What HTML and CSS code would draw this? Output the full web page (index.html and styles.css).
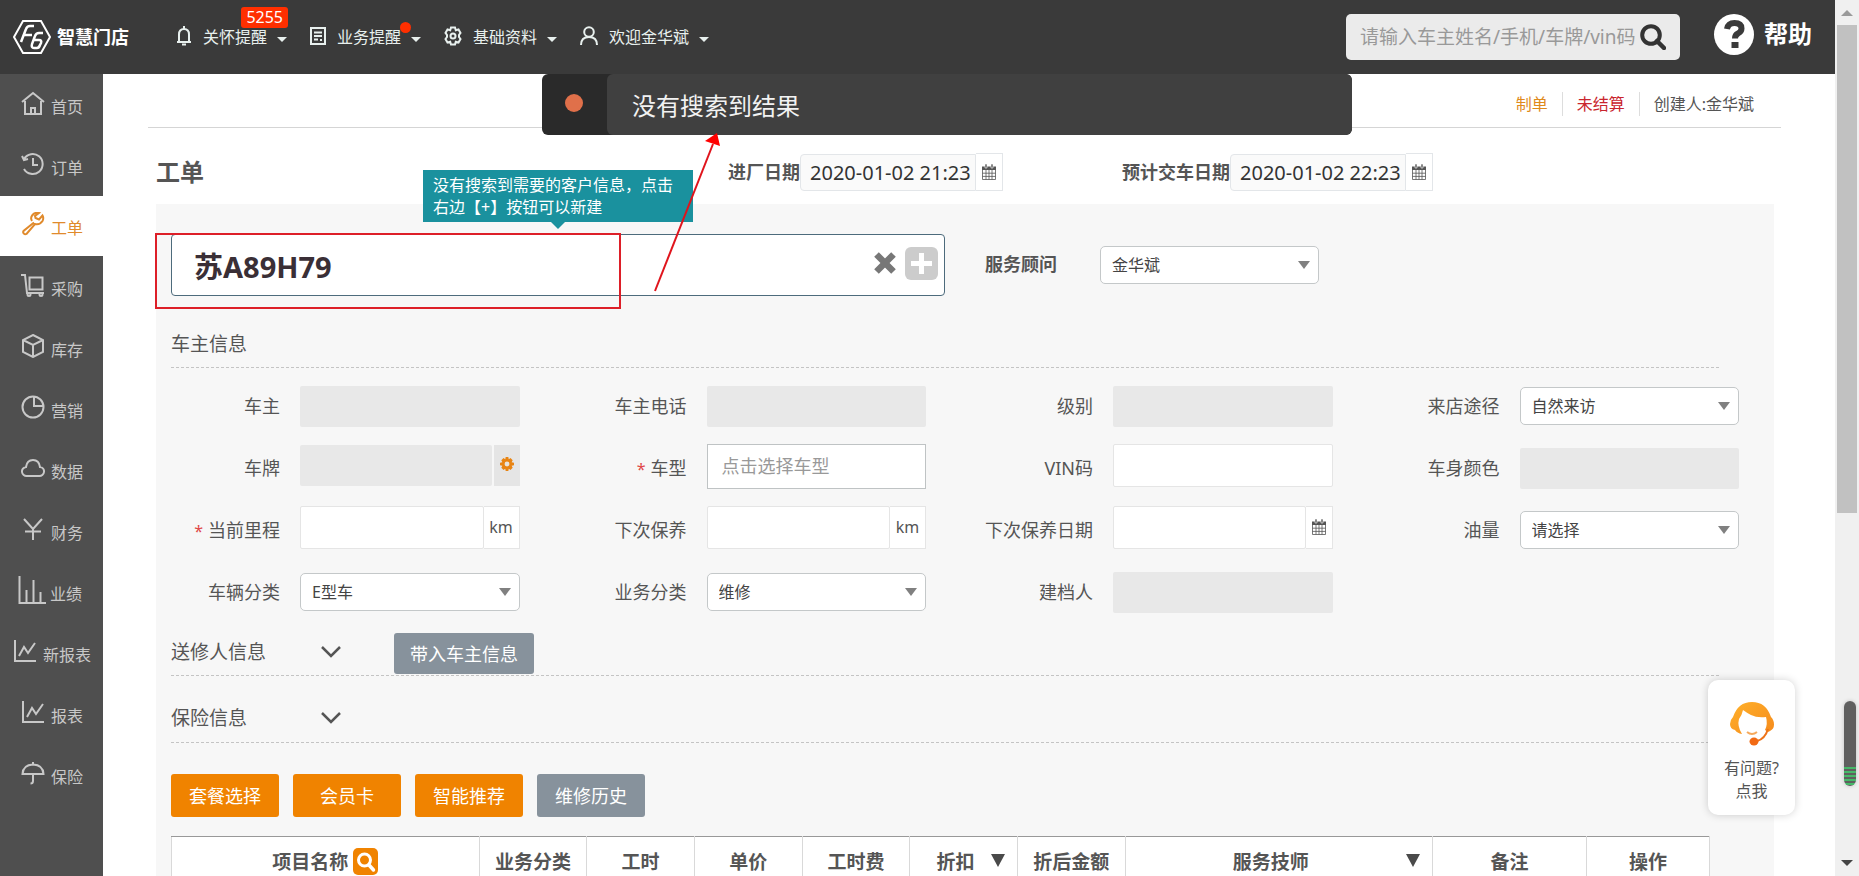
FILE: index.html
```html
<!DOCTYPE html>
<html lang="zh-CN">
<head>
<meta charset="utf-8">
<title>工单 - 智慧门店</title>
<link rel="stylesheet" href="styles.css">
</head>
<body>
<svg class="defs" aria-hidden="true">
  <symbol id="i-cal" viewBox="0 0 14 16"><path d="M0 2.500h14V6H0z" fill="currentColor"/><path d="M3 0h2v4H3zM9 0h2v4H9z" fill="currentColor" stroke="#fff" stroke-width=".6"/><path d="M.5 6v9.500h13V6M.5 9.200h13M.5 12.400h13M4 6v9.500M7 6v9.500M10 6v9.500" fill="none" stroke="currentColor" stroke-width=".8"/></symbol>
  <symbol id="i-chart" viewBox="0 0 24 24"><path d="M2 1v21h21M6 17l5-9 4 6 7-10" fill="none" stroke="currentColor" stroke-width="2"/></symbol>
  <symbol id="i-down" viewBox="0 0 20 12"><path d="M1 1l9 9 9-9" fill="none" stroke="currentColor" stroke-width="2.500"/></symbol>
</svg>
<div class="app">
  <header class="header">
    <a class="logo" href="#">
      <svg width="40" height="36" viewBox="0 0 40 36" fill="none" stroke="#fff" stroke-width="2"><path d="M11 2h18l9 16-9 16H11L2 18z"/><path d="M22 7h-4q-3 0-4 3l-5 13M12 16h8" stroke-width="2.500"/><path d="M31 14h-4q-3 0-4 3l-3 8q-1 4 2 4h3q2 0 3-3l1-2q1-3-2-3h-5" stroke-width="2.500"/></svg>
      <span>智慧门店</span>
    </a>
    <nav class="menu">
      <a class="menu-item" href="#"><svg width="18" height="22" viewBox="0 0 18 22" fill="none" stroke="currentColor" stroke-width="2"><path d="M4 16V9.500Q4 4 9 4t5 5.500V16M2 17h14M9 1v3M7 19.500h4"/></svg><span>关怀提醒</span><i class="caret"></i><b class="badge">5255</b></a>
      <a class="menu-item" href="#"><svg width="18" height="22" viewBox="0 0 18 22" fill="none" stroke="currentColor" stroke-width="2"><path d="M2 3h14v16H2zM5 7.500h8M5 11h8M5 14.500h4M12 14v2"/></svg><span>业务提醒</span><i class="caret"></i><b class="dot"></b></a>
      <a class="menu-item" href="#"><svg width="20" height="22" viewBox="0 0 20 22" fill="none" stroke="currentColor" stroke-width="2"><path d="M8 2.500h4l.8 2.700 2.700-.7 2 3.400L16 10v2l1.500 2-2 3.500-2.700-.7-.8 2.700H8l-.8-2.700-2.700.7-2-3.500L4 12v-2L2.500 7.900l2-3.400 2.700.7z"/><circle cx="10" cy="11" r="2.500"/></svg><span>基础资料</span><i class="caret"></i></a>
      <a class="menu-item" href="#"><svg width="20" height="22" viewBox="0 0 20 22" fill="none" stroke="currentColor" stroke-width="2"><circle cx="10" cy="7" r="4.800"/><path d="M2 20q0-8 8-8t8 8"/></svg><span>欢迎金华斌</span><i class="caret"></i></a>
    </nav>
    <form class="search">
      <input type="text" aria-label="搜索" placeholder="请输入车主姓名/手机/车牌/vin码">
      <button type="button" aria-label="搜索"><svg width="26" height="26" viewBox="0 0 26 26" fill="none" stroke="#333"><circle cx="11" cy="11" r="8.800" stroke-width="4"/><path d="M17 17l7 7" stroke-width="4.500" stroke-linecap="round"/></svg></button>
    </form>
    <a class="help" href="#"><svg width="40" height="41" viewBox="0 0 40 41"><ellipse cx="20" cy="20.500" rx="20" ry="20.500" fill="#fff"/><path d="M13 15q1-6 7.500-6 7 0 7 5.500 0 3-3.500 5-3 1.500-3 5" fill="none" stroke="#3a3a3a" stroke-width="6"/><path d="M17.500 28h7v6h-7z" fill="#3a3a3a"/></svg>帮助</a>
  </header>

  <div class="body">
    <nav class="side">
      <a href="#"><svg width="24" height="24" viewBox="0 0 24 24"><path d="M1 11L12 2l11 9M4 10v13h16V10M10 23v-6h4v6"/></svg><span>首页</span></a>
      <a href="#"><svg width="24" height="24" viewBox="0 0 24 24"><path d="M3 7a10 10 0 1 1 0 10M12 6v7h5M1 4l2 4 4-1"/></svg><span>订单</span></a>
      <a href="#" class="active"><svg width="24" height="24" viewBox="0 0 24 24"><path d="M13 10.500L2.500 19a2.200 2.200 0 0 0 3 3L14 12q5 1 7.500-3 1.500-3 0-5.500L18 7.500 14.500 6l-.5-2L18 1q-4-1-6.500 2T11 9"/></svg><span>工单</span></a>
      <a href="#"><svg width="24" height="24" viewBox="0 0 24 24"><path d="M0 2h4l2 18h17M8.500 4.500h13v12h-13z"/><circle cx="8" cy="21.500" r="1.500"/><circle cx="20" cy="21.500" r="1.500"/></svg><span>采购</span></a>
      <a href="#"><svg width="24" height="24" viewBox="0 0 24 24"><path d="M12 1l10 5v12l-10 5L2 18V6zM2 6l10 5 10-5M12 11v12"/></svg><span>库存</span></a>
      <a href="#"><svg width="24" height="24" viewBox="0 0 24 24"><circle cx="12" cy="12" r="10.500"/><path d="M13 2v9h9"/></svg><span>营销</span></a>
      <a href="#"><svg width="24" height="24" viewBox="0 0 24 24"><path d="M6 20a4.500 4.500 0 0 1-1-9Q6 4 12 4t7 7a4.500 4.500 0 0 1-1 9z"/></svg><span>数据</span></a>
      <a href="#"><svg width="24" height="24" viewBox="0 0 24 24"><path d="M3 2l9 10 9-10M12 12v11M4 14.500h16"/></svg><span>财务</span></a>
      <a href="#" class="large"><svg width="28" height="28" viewBox="0 0 28 28"><path d="M1.500 0v27H28M8.500 14v12M15.500 4v22M22.500 16v10"/></svg><span>业绩</span></a>
      <a href="#"><svg width="24" height="24"><use href="#i-chart"/></svg><span>新报表</span></a>
      <a href="#"><svg width="24" height="24"><use href="#i-chart"/></svg><span>报表</span></a>
      <a href="#"><svg width="24" height="24" viewBox="0 0 24 24"><path d="M1.500 13Q2 4 12 3.500 22 4 22.500 13zM12 1v3M12 13v7q0 2.500-2.500 2.500"/></svg><span>保险</span></a>
    </nav>

    <main class="main">
      <div class="status">
        <span class="s-orange">制单</span><span class="s-red">未结算</span><span>创建人:金华斌</span>
      </div>
      <div class="title-row">
        <h1>工单</h1>
        <div class="date date-in"><label for="d1">进厂日期</label><input id="d1" type="text" value="2020-01-02 21:23"><button type="button" aria-label="选择日期"><svg width="14" height="16"><use href="#i-cal"/></svg></button></div>
        <div class="date"><label for="d2">预计交车日期</label><input id="d2" type="text" value="2020-01-02 22:23"><button type="button" aria-label="选择日期"><svg width="14" height="16"><use href="#i-cal"/></svg></button></div>
      </div>

      <div class="panel">
        <div class="plate-row">
          <div class="plate">
            <input type="text" aria-label="车牌" value="苏A89H79">
            <button type="button" aria-label="清除"><svg width="22" height="22" viewBox="0 0 22 22" stroke="#777" stroke-width="6.500"><path d="M2.500 2.500l17 17M19.500 2.500l-17 17"/></svg></button>
            <button type="button" aria-label="新建"><svg width="33" height="33" viewBox="0 0 33 33"><rect width="33" height="33" rx="6" fill="#ccc"/><path d="M16.500 6v21M6 16.500h21" stroke="#fff" stroke-width="5"/></svg></button>
            <div class="tip" role="tooltip">没有搜索到需要的客户信息，点击右边【+】按钮可以新建</div>
            <div class="mark"></div>
          </div>
          <label class="advisor" for="adv">服务顾问</label>
          <div class="select advisor-select"><select id="adv"><option>金华斌</option></select></div>
        </div>

        <h2 class="section">车主信息</h2>
        <div class="grid">
          <div class="cell"><label for="f1">车主</label><input id="f1" class="ctl off" disabled></div>
          <div class="cell"><label for="f2">车主电话</label><input id="f2" class="ctl off" disabled></div>
          <div class="cell"><label for="f3">级别</label><input id="f3" class="ctl off" disabled></div>
          <div class="cell"><label for="f4">来店途径</label><div class="select"><select id="f4"><option>自然来访</option></select></div></div>

          <div class="cell"><label for="f5">车牌</label><div class="group group-off raised"><input id="f5" class="ctl off" disabled><button type="button" aria-label="设置"><svg width="14" height="16" viewBox="0 0 16 16"><path d="M6.500 0h3l.5 2.500 2-1.300 2.500 2.500L13.300 6l2.700.5v3l-2.700.5 1.200 2.300-2.500 2.500-2-1.300-.5 2.500h-3L6 13.500l-2 1.300-2.500-2.500L2.700 10 0 9.500v-3L2.700 6 1.500 3.700 4 1.200l2 1.300z" fill="#e88413"/><circle cx="8" cy="8" r="2.800" fill="#e9e4dc"/></svg></button></div></div>
          <div class="cell"><label for="f6"><em>*</em>车型</label><input id="f6" class="ctl model" placeholder="点击选择车型"></div>
          <div class="cell"><label for="f7">VIN码</label><input id="f7" class="ctl raised"></div>
          <div class="cell"><label for="f8">车身颜色</label><input id="f8" class="ctl off" disabled></div>

          <div class="cell"><label for="f9"><em>*</em>当前里程</label><div class="group raised"><input id="f9" class="ctl"><span class="unit">km</span></div></div>
          <div class="cell"><label for="f10">下次保养</label><div class="group raised"><input id="f10" class="ctl"><span class="unit">km</span></div></div>
          <div class="cell"><label for="f11">下次保养日期</label><div class="group raised"><input id="f11" class="ctl"><button type="button" aria-label="选择日期"><svg width="14" height="16"><use href="#i-cal"/></svg></button></div></div>
          <div class="cell"><label for="f12">油量</label><div class="select"><select id="f12"><option>请选择</option></select></div></div>

          <div class="cell"><label for="f13">车辆分类</label><div class="select"><select id="f13"><option>E型车</option></select></div></div>
          <div class="cell"><label for="f14">业务分类</label><div class="select"><select id="f14"><option>维修</option></select></div></div>
          <div class="cell"><label for="f15">建档人</label><input id="f15" class="ctl off" disabled></div>
        </div>

        <div class="fold fold-first"><h2>送修人信息</h2><button type="button" class="toggle" aria-label="展开"><svg width="20" height="12"><use href="#i-down"/></svg></button><button type="button" class="btn gray wide">带入车主信息</button></div>
        <div class="fold fold-next"><h2>保险信息</h2><button type="button" class="toggle" aria-label="展开"><svg width="20" height="12"><use href="#i-down"/></svg></button></div>

        <div class="actions">
          <button type="button" class="btn">套餐选择</button><button type="button" class="btn">会员卡</button><button type="button" class="btn">智能推荐</button><button type="button" class="btn gray">维修历史</button>
        </div>

        <table class="items">
          <colgroup><col class="w20"><col class="w7"><col class="w7"><col class="w7"><col class="w7"><col class="w7"><col class="w7"><col class="w20"><col class="w10"><col class="w8"></colgroup>
          <thead><tr>
            <th><span class="th">项目名称<svg width="25" height="27" viewBox="0 0 25 27"><rect width="25" height="27" rx="5" fill="#f08300"/><circle cx="11.500" cy="12" r="6" fill="none" stroke="#fff" stroke-width="3"/><path d="M16 17l4.500 5" stroke="#fff" stroke-width="3.500" stroke-linecap="round"/></svg></span></th>
            <th>业务分类</th><th>工时</th><th>单价</th><th>工时费</th>
            <th class="sort">折扣<i></i></th><th>折后金额</th><th class="sort">服务技师<i></i></th><th>备注</th><th>操作</th>
          </tr></thead>
          <tbody><tr><td colspan="10"></td></tr></tbody>
        </table>
      </div>
    </main>
  </div>

  <div class="toast" role="alert"><span class="toast-mark"></span><p>没有搜索到结果</p></div>
  <svg class="arrow" width="70" height="162" viewBox="0 0 70 162" aria-hidden="true"><path d="M2 159L60 12" stroke="#e0141c" stroke-width="2"/><path d="M64 1l3 13-15-5z" fill="#f00"/></svg>
  <a class="chat" href="#"><svg width="44" height="44" viewBox="0 0 44 44"><defs><linearGradient id="g" x1="0" y1="0" x2="1" y2="1"><stop offset="0" stop-color="#ffb12a"/><stop offset="1" stop-color="#f58a1c"/></linearGradient></defs><path fill-rule="evenodd" d="M3 15Q8 0 22 0t19 15q3 3 3 7.500T40 29l-2 1-3-2q3-6 1-13-9 1-15-2-4-2-8-5-1 5-4 9-2 7 3 15-5-1-7-4Q0 27 0 22q0-4 3-7z" fill="url(#g)"/><path d="M38 27q-3 10-11 12" fill="none" stroke="#ee7318" stroke-width="2"/><ellipse cx="24" cy="39.500" rx="4.500" ry="4" fill="#f26a14"/><path d="M17 30q5 4 10 0" fill="none" stroke="#f5a95c" stroke-width="2"/></svg><span>有问题?<br>点我</span></a>
</div>
<div class="rail" aria-hidden="true"><i class="tri up"></i><span class="thumb"></span><i class="tri down"></i><span class="meter"></span></div>
</body>
</html>
```
FILE: styles.css
```css
* { box-sizing: border-box; }
body { margin: 0; display: flex; height: 100vh; overflow: hidden; background: #fff; color: #555; font: 16px/22px "Noto Sans", "Noto Sans CJK SC", sans-serif; }
a { color: inherit; text-decoration: none; }
input, select, button { font: inherit; color: inherit; margin: 0; border: 0; padding: 0; min-width: 0; background: none; border-radius: 0; }
h1, h2, p { margin: 0; font-weight: 400; }
svg { display: block; flex: none; }
label { white-space: nowrap; }
.defs { position: absolute; width: 0; height: 0; }
.app { position: relative; flex: 1; min-width: 0; display: flex; flex-direction: column; }

.header { display: flex; align-items: center; height: 74px; flex: none; background: #3a3a3a; color: #e8f0ee; padding: 0 23px 0 12px; }
.logo { display: flex; align-items: center; gap: 5px; font-size: 18px; font-weight: 700; color: #fff; margin-right: 46px; }
.menu { display: flex; gap: 22px; flex: 1; }
.menu-item { position: relative; display: flex; align-items: center; gap: 10px; white-space: nowrap; }
.menu-item svg { margin-bottom: 3px; }
.caret { border: 5px solid transparent; border-top-color: currentColor; border-bottom: 0; margin-top: 5px; }
.badge { position: absolute; right: -1px; top: -18px; background: #ff2f00; color: #fff; font-weight: 400; line-height: 21px; padding: 0 5px; border-radius: 3px; }
.dot { position: absolute; right: 10px; top: -3px; width: 11px; height: 11px; border-radius: 50%; background: #ff2f00; }
.search { display: flex; align-items: center; width: 334px; height: 46px; background: #ebebeb; border-radius: 5px; padding: 0 14px; }
.search input { flex: 1; font-size: 19px; height: 44px; outline: 0; }
.search input::placeholder { color: #999; opacity: 1; }
.help { display: flex; align-items: center; gap: 10px; margin: 0 0 6px 34px; font-size: 24px; font-weight: 700; color: #fff; line-height: 32px; }

.body { display: flex; flex: 1; min-height: 0; }
.side { width: 103px; flex: none; background: #4f4f4f; color: #c8c8c8; overflow: hidden; }
.side a { display: flex; align-items: center; justify-content: center; gap: 6px; height: 61px; padding-left: 1px; }
.side svg { fill: none; stroke: currentColor; stroke-width: 2; margin-bottom: 4px; }
.side .large { padding-right: 4px; gap: 4px; }
.side span { padding-top: 4px; }
.side .active { background: #fff; color: #e08a2c; height: 60px; }

.main { flex: 1; min-width: 0; overflow: hidden; }
.status { display: flex; justify-content: flex-end; align-items: center; height: 54px; margin: 0 54px 0 45px; padding: 6px 27px 0 0; border-bottom: 1px solid #d5d5d5; }
.status span { line-height: 24px; padding: 0 14px; }
.status span:last-child { padding-right: 0; }
.status span + span { border-left: 1px solid #ddd; }
.s-orange { color: #e08a1c; }
.s-red { color: #c9252d; }
.title-row { display: flex; align-items: center; height: 76px; padding: 12px 61px 0 53px; }
.title-row h1 { font-size: 24px; font-weight: 700; line-height: 32px; width: 572px; }
.date { display: flex; align-items: center; font-size: 18px; }
.date-in { margin-right: 119px; }
.date label { font-weight: 700; }
.date input { width: 176px; height: 37px; border: 1px solid #e3e6e9; border-radius: 4px 0 0 4px; background: #fafafa; padding-left: 9px; font-size: 20px; color: #333; }
.date button { display: grid; place-items: center; width: 27px; height: 38px; border: 1px solid #e3e6e9; border-left: 0; }

.panel { margin: 0 61px 0 53px; padding: 30px 35px 0 15px; background: #f7f7f7; min-height: 700px; }
.plate-row { display: flex; align-items: center; }
.plate { position: relative; display: flex; align-items: center; gap: 9px; width: 774px; height: 62px; padding: 0 6px 0 22px; background: #fff; border: 1px solid #4d6b7c; border-radius: 4px; }
.plate input { flex: 1; height: 60px; font-size: 29px; font-weight: 700; color: #3a2f36; }
.plate button { margin-bottom: 4px; }
.mark { position: absolute; left: -17px; top: -2px; width: 466px; height: 76px; border: 2px solid #dd1f28; }
.tip { position: absolute; left: 251px; top: -65px; width: 270px; padding: 4px 8px 4px 10px; background: #1a919e; color: #fff; }
.tip::after { content: ""; position: absolute; left: 50%; top: 100%; margin-left: -7px; border: 7px solid transparent; border-top-color: #1a919e; border-bottom: 0; }
.advisor { margin: 0 43px 2px 40px; font-size: 18px; font-weight: 700; }
.advisor-select { width: 219px; }
.select { position: relative; height: 38px; }
.select select { appearance: none; width: 100%; height: 100%; padding: 0 30px 0 11px; border: 1px solid #c4c8c9; border-radius: 5px; background: #fff; color: #444; }
.select::after { content: ""; position: absolute; right: 9px; top: 15px; border: 6px solid transparent; border-top: 8px solid #808080; border-bottom: 0; pointer-events: none; }

.section { margin: 35px 20px 7px 0; padding-bottom: 10px; font-size: 19px; line-height: 26px; border-bottom: 1px dashed #c4c4c4; }
.grid { display: grid; grid-template-columns: repeat(4, 1fr); column-gap: 58px; grid-auto-rows: 62px; }
.cell { display: grid; grid-template-columns: 109px 1fr; column-gap: 20px; align-items: center; }
.cell > label { text-align: right; font-size: 18px; }
.cell em { color: #e04848; font-style: normal; font-size: 16px; margin-right: 5px; }
.ctl { width: 100%; height: 43px; border: 1px solid #e5e5e5; background: #fff; border-radius: 2px; padding: 0 10px; }
.off { height: 41px; background: #e8e8e8; border: 0; }
.raised { margin-bottom: 6px; }
.model { height: 45px; border-color: #bfc3c4; padding: 0 14px; font-size: 18px; border-radius: 0; margin-bottom: 4px; }
.model::placeholder { color: #999; opacity: 1; }
.group { display: flex; }
.group .ctl { flex: 1; }
.unit, .group button { display: grid; place-items: center; background: #fff; border: 1px solid #e5e5e5; border-left: 0; }
.unit { width: 36px; }
.group button { width: 27px; }
.group-off { gap: 2px; }
.group-off button { background: #e5e5e5; border: 0; width: 26px; padding-bottom: 2px; }

.fold { display: flex; align-items: flex-start; margin-right: 20px; border-bottom: 1px dashed #c4c4c4; }
.fold h2 { width: 150px; font-size: 19px; line-height: 26px; }
.toggle { margin: 7px 53px 0 0; }
.fold-first { margin-top: 10px; padding-bottom: 1px; }
.fold-first h2 { padding-top: 6px; }
.fold-first .toggle { margin-top: 13px; }
.fold-next { padding: 29px 0 11px; }
.btn { height: 43px; width: 108px; border-radius: 3px; background: #f08300; color: #fff; font-size: 18px; }
.gray { background: #87929c; }
.wide { width: 140px; height: 41px; }
.actions { display: flex; gap: 14px; margin: 31px 0 19px; }

.items { table-layout: fixed; width: calc(100% - 29px); border-collapse: collapse; background: #fff; font-size: 19px; }
.items th, .items td { height: 50px; padding: 0; border: 1px solid #d9d9d9; border-top-color: #999; }
.th { display: flex; align-items: center; justify-content: center; gap: 5px; }
.w20 { width: 20%; } .w10 { width: 10%; } .w8 { width: 8%; } .w7 { width: 7%; }
.sort { position: relative; }
.items .sort { padding-right: 16px; }
.sort i { position: absolute; right: 12px; top: 17px; border: 7px solid transparent; border-top: 13px solid #4a4a4a; border-bottom: 0; }

.toast { position: absolute; left: 542px; top: 74px; width: 810px; height: 61px; display: flex; background: #2a2a2a; border-radius: 6px; overflow: hidden; }
.toast-mark { width: 18px; height: 18px; margin: 20px 24px 0 23px; border-radius: 50%; background: #e0704a; }
.toast p { flex: 1; padding-left: 25px; background: #404040; color: #f2f2f2; border-radius: 6px; font: 24px/62px KaiTi, "Noto Sans CJK SC", serif; }
.arrow { position: absolute; left: 653px; top: 132px; fill: none; }
.chat { position: absolute; right: 40px; bottom: 61px; width: 87px; height: 135px; padding-top: 22px; display: flex; flex-direction: column; align-items: center; gap: 11px; text-align: center; line-height: 23px; background: #fff; border-radius: 10px; box-shadow: 0 0 8px rgba(0, 0, 0, .18); }

.rail { position: relative; width: 24px; flex: none; display: flex; flex-direction: column; align-items: center; background: #f0f0f0; padding: 10px 0 10px; }
.tri { border: 6px solid transparent; }
.up { border-bottom-color: #9a9a9a; border-top: 0; }
.down { border-top-color: #444; border-bottom: 0; margin-top: auto; }
.thumb { width: 20px; height: 57%; margin-top: 9px; background: #c1c1c1; }
.meter { position: absolute; right: 3px; top: 701px; width: 12px; height: 85px; border-radius: 6px; background: linear-gradient(#5f5f5f 64px, transparent 64px), repeating-linear-gradient(#5f5f5f 0 2px, #45b868 2px 4px); box-shadow: 0 0 4px rgba(0, 0, 0, .2); }
```
